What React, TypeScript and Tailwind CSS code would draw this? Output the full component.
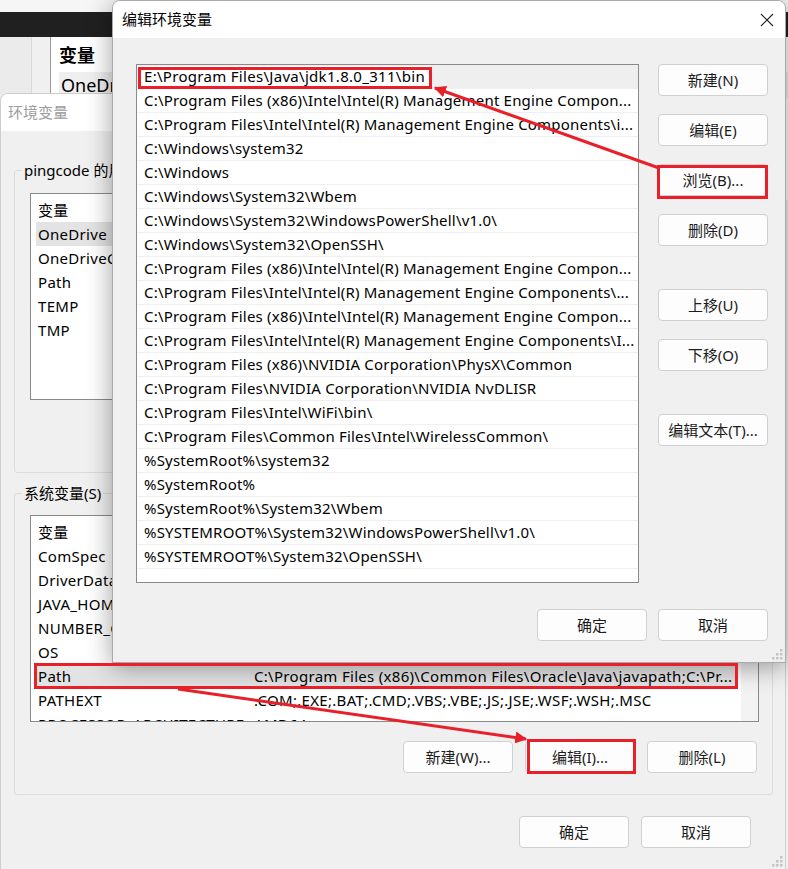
import type { ReactNode } from "react";

const pathRows = [
  "E:\\Program Files\\Java\\jdk1.8.0_311\\bin",
  "C:\\Program Files (x86)\\Intel\\Intel(R) Management Engine Compon...",
  "C:\\Program Files\\Intel\\Intel(R) Management Engine Components\\i...",
  "C:\\Windows\\system32",
  "C:\\Windows",
  "C:\\Windows\\System32\\Wbem",
  "C:\\Windows\\System32\\WindowsPowerShell\\v1.0\\",
  "C:\\Windows\\System32\\OpenSSH\\",
  "C:\\Program Files (x86)\\Intel\\Intel(R) Management Engine Compon...",
  "C:\\Program Files\\Intel\\Intel(R) Management Engine Components\\...",
  "C:\\Program Files (x86)\\Intel\\Intel(R) Management Engine Compon...",
  "C:\\Program Files\\Intel\\Intel(R) Management Engine Components\\I...",
  "C:\\Program Files (x86)\\NVIDIA Corporation\\PhysX\\Common",
  "C:\\Program Files\\NVIDIA Corporation\\NVIDIA NvDLISR",
  "C:\\Program Files\\Intel\\WiFi\\bin\\",
  "C:\\Program Files\\Common Files\\Intel\\WirelessCommon\\",
  "%SystemRoot%\\system32",
  "%SystemRoot%",
  "%SystemRoot%\\System32\\Wbem",
  "%SYSTEMROOT%\\System32\\WindowsPowerShell\\v1.0\\",
  "%SYSTEMROOT%\\System32\\OpenSSH\\",
];

const userVars: [string, string][] = [
  ["变量", "值"],
  ["OneDrive", "C:\\Users\\pingcode\\OneDrive"],
  ["OneDriveConsumer", "C:\\Users\\pingcode\\OneDrive"],
  ["Path", "C:\\Users\\pingcode\\AppData\\Local\\Microsoft\\WindowsApps;"],
  ["TEMP", "C:\\Users\\pingcode\\AppData\\Local\\Temp"],
  ["TMP", "C:\\Users\\pingcode\\AppData\\Local\\Temp"],
];

const systemVars: [string, string][] = [
  ["变量", "值"],
  ["ComSpec", "C:\\Windows\\system32\\cmd.exe"],
  ["DriverData", "C:\\Windows\\System32\\Drivers\\DriverData"],
  ["JAVA_HOME", "E:\\Program Files\\Java\\jdk1.8.0_311"],
  ["NUMBER_OF_PROCESSORS", "12"],
  ["OS", "Windows_NT"],
  ["Path", "C:\\Program Files (x86)\\Common Files\\Oracle\\Java\\javapath;C:\\Pr..."],
  ["PATHEXT", ".COM;.EXE;.BAT;.CMD;.VBS;.VBE;.JS;.JSE;.WSF;.WSH;.MSC"],
  ["PROCESSOR_ARCHITECTURE", "AMD64"],
];

function Btn({ children, className = "" }: { children: ReactNode; className?: string }) {
  return (
    <div
      className={`flex h-[32px] shrink-0 items-center justify-center rounded-[4px] border border-[#d0d0d0] bg-[#fdfdfd] text-[15px] text-[#1b1b1b] ${className}`}
    >
      {children}
    </div>
  );
}

function Grip() {
  const dots = [
    [8, 0],
    [8, 4],
    [4, 4],
    [8, 8],
    [4, 8],
    [0, 8],
  ];
  return (
    <svg width="11" height="11" viewBox="0 0 11 11" className="absolute bottom-[2px] right-[2px]">
      {dots.map(([x, y], i) => (
        <rect key={i} x={x} y={y} width="2.5" height="2.5" fill="#c4c4c4" />
      ))}
    </svg>
  );
}

function VarList({ rows, selected }: { rows: [string, string][]; selected: string }) {
  return (
    <div className="flex h-[207px] overflow-hidden border border-[#8a8a8a] bg-white">
      <div className="flex-1 overflow-hidden px-[5px] pt-[4px]">
        {rows.map(([name, value], i) => (
          <div
            key={name + i}
            className={`flex h-[24px] items-center whitespace-nowrap text-[15px] tracking-[0.3px] ${
              name === selected ? "bg-[#e3e3e3]" : ""
            }`}
          >
            <span className="w-[218px] shrink-0 overflow-hidden pl-[2px]">{name}</span>
            <span className="overflow-hidden">{value}</span>
          </div>
        ))}
      </div>
      <div className="w-[17px] shrink-0 bg-[#f3f3f3]" />
    </div>
  );
}

function EnvDialog() {
  return (
    <div className="absolute left-0 top-[93px] flex h-[777px] w-[786px] flex-col overflow-hidden rounded-t-[8px] border border-[#cdcdcd] bg-[#f0f0f0]">
      <div className="flex h-[37px] shrink-0 items-center bg-white pl-[7px] text-[15px] text-[#9d9d9d]">
        环境变量
      </div>
      <div className="flex flex-col pl-[13px] pt-[29px]">
        <fieldset className="h-[313px] w-[759px] rounded-[3px] border border-[#dcdcdc] pb-0 pl-[15px] pr-[13px] pt-[13px]">
          <legend className="-ml-[8px] px-[2px] text-[15px] leading-[20px]">pingcode 的用户变量(U)</legend>
          <VarList rows={userVars} selected="OneDrive" />
          <div className="mt-[19px] flex justify-end gap-[12px] pr-[1px]">
            <Btn className="w-[109px]">新建(N)...</Btn>
            <Btn className="w-[109px]">编辑(E)...</Btn>
            <Btn className="w-[109px]">删除(D)</Btn>
          </div>
        </fieldset>
        <fieldset className="mt-[10px] h-[312px] w-[759px] rounded-[3px] border border-[#dcdcdc] pl-[15px] pr-[13px] pt-[12px]">
          <legend className="-ml-[8px] px-[2px] text-[15px] leading-[20px]">系统变量(S)</legend>
          <VarList rows={systemVars} selected="Path" />
          <div className="mt-[19px] flex justify-end gap-[12px] pr-[2px]">
            <Btn className="w-[110px]">新建(W)...</Btn>
            <Btn className="w-[110px]">编辑(I)...</Btn>
            <Btn className="w-[110px]">删除(L)</Btn>
          </div>
        </fieldset>
        <div className="mt-[21px] flex justify-end gap-[12px] pr-[34px]">
          <Btn className="w-[110px]">确定</Btn>
          <Btn className="w-[110px]">取消</Btn>
        </div>
      </div>
      <Grip />
    </div>
  );
}

function EditDialog() {
  return (
    <div className="absolute left-[112px] top-0 flex h-[663px] w-[674px] flex-col overflow-hidden rounded-t-[8px] border border-[#a9a9a9] bg-[#f0f0f0] shadow-[0_4px_26px_rgba(0,0,0,0.38)]">
      <div className="flex h-[37px] shrink-0 items-center justify-between bg-white pl-[9px] pr-[11px] text-[15px] text-black">
        <span>编辑环境变量</span>
        <svg width="14" height="14" viewBox="0 0 14 14">
          <path d="M1 1 L13 13 M13 1 L1 13" stroke="#222" strokeWidth="1.1" fill="none" />
        </svg>
      </div>
      <div className="flex flex-col pl-[23px] pt-[26px]">
        <div className="flex items-start gap-[19px]">
          <div className="h-[519px] w-[503px] overflow-hidden border border-[#8a8a8a] bg-white">
            {pathRows.map((row, i) =>
              i === 0 ? (
                <div key={i} className="flex h-[24px] items-center border-b border-[#efefef] bg-[#efefef]">
                  <div className="ml-[1px] flex h-[22px] w-[293px] items-center whitespace-nowrap bg-white pl-[6px] text-[15px] tracking-[0.3px]">
                    {row}
                  </div>
                </div>
              ) : (
                <div
                  key={i}
                  className="flex h-[24px] items-center overflow-hidden whitespace-nowrap border-b border-[#efefef] pl-[7px] text-[15px] tracking-[0.2px]"
                >
                  {row}
                </div>
              ),
            )}
          </div>
          <div className="flex w-[110px] flex-col">
            <Btn className="w-[110px]">新建(N)</Btn>
            <Btn className="mt-[18px] w-[110px]">编辑(E)</Btn>
            <Btn className="mt-[18px] w-[110px]">浏览(B)...</Btn>
            <Btn className="mt-[18px] w-[110px]">删除(D)</Btn>
            <Btn className="mt-[43px] w-[110px]">上移(U)</Btn>
            <Btn className="mt-[18px] w-[110px]">下移(O)</Btn>
            <Btn className="mt-[43px] w-[110px]">编辑文本(T)...</Btn>
          </div>
        </div>
        <div className="mt-[26px] flex justify-end gap-[11px] pr-[17px]">
          <Btn className="w-[110px]">确定</Btn>
          <Btn className="w-[110px]">取消</Btn>
        </div>
      </div>
      <Grip />
    </div>
  );
}

function Annotations() {
  const red = "#e8202a";
  return (
    <svg className="pointer-events-none absolute left-0 top-0" width="788" height="869">
      <defs>
        <marker id="ah" viewBox="0 0 10 10" refX="9" refY="5" markerWidth="4" markerHeight="4" orient="auto">
          <path d="M0,0 L10,5 L0,10 z" fill={red} />
        </marker>
      </defs>
      <rect x="139.5" y="68.5" width="291" height="19" fill="none" stroke={red} strokeWidth="3" />
      <rect x="658.5" y="166.5" width="108" height="31" fill="none" stroke={red} strokeWidth="3" />
      <rect x="35.5" y="664.5" width="701" height="23" fill="none" stroke={red} strokeWidth="3" />
      <rect x="528.5" y="740.5" width="106" height="32" fill="none" stroke={red} strokeWidth="3" />
      <line x1="659" y1="168" x2="435" y2="88" stroke={red} strokeWidth="3" markerEnd="url(#ah)" />
      <line x1="178" y1="689" x2="526" y2="739" stroke={red} strokeWidth="3" markerEnd="url(#ah)" />
    </svg>
  );
}

export default function App() {
  return (
    <div className="relative h-[869px] w-[788px] overflow-hidden bg-[#f0f0f0] font-['Noto_Sans','Noto_Sans_CJK_SC',sans-serif] text-black">
      {/* window further back */}
      <div className="absolute left-0 top-0 flex h-[200px] w-[788px] flex-col">
        <div className="h-[12px] bg-[#f6f6f6]" />
        <div className="h-[25px] bg-[#202020]" />
        <div className="flex flex-1 bg-[#f0f0f0]">
          <div className="w-[32px] border-r border-[#d8d8d8] bg-[#ebebeb]" />
          <div className="w-[18px]" />
          <div className="flex-1 border-l border-[#9a9a9a] bg-white pl-[8px] pt-[3px] text-[18px]">
            <div className="flex h-[30px] items-center font-semibold">变量</div>
            <div className="mt-[2px] flex h-[26px] items-center bg-[#efefef] pl-[2px]">OneDrive</div>
          </div>
        </div>
      </div>
      <EnvDialog />
      <EditDialog />
      <Annotations />
    </div>
  );
}
